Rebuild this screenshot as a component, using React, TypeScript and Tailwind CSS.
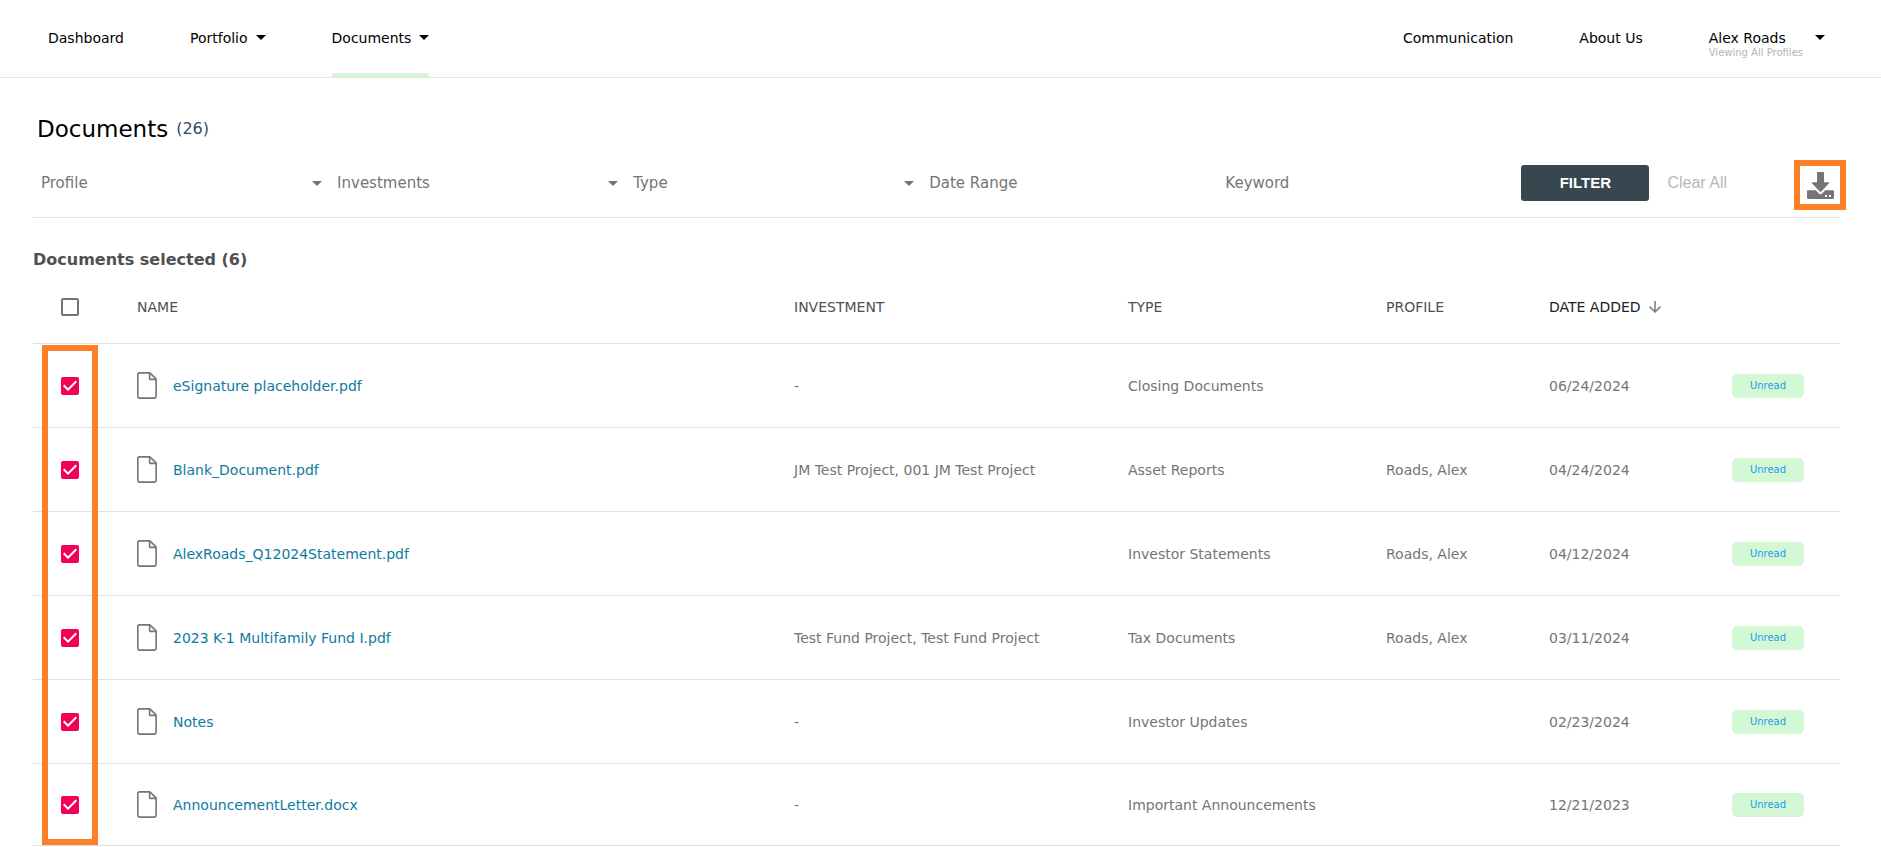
import React, { useState } from 'react';

interface Doc {
  name: string;
  investment: string;
  type: string;
  profile: string;
  date: string;
}

const DOCUMENTS: Doc[] = [
  { name: 'eSignature placeholder.pdf', investment: '-', type: 'Closing Documents', profile: '', date: '06/24/2024' },
  { name: 'Blank_Document.pdf', investment: 'JM Test Project, 001 JM Test Project', type: 'Asset Reports', profile: 'Roads, Alex', date: '04/24/2024' },
  { name: 'AlexRoads_Q12024Statement.pdf', investment: '', type: 'Investor Statements', profile: 'Roads, Alex', date: '04/12/2024' },
  { name: '2023 K-1 Multifamily Fund I.pdf', investment: 'Test Fund Project, Test Fund Project', type: 'Tax Documents', profile: 'Roads, Alex', date: '03/11/2024' },
  { name: 'Notes', investment: '-', type: 'Investor Updates', profile: '', date: '02/23/2024' },
  { name: 'AnnouncementLetter.docx', investment: '-', type: 'Important Announcements', profile: '', date: '12/21/2023' },
];

function Caret({ className = '' }: { className?: string }) {
  return (
    <svg viewBox="0 0 10 5" className={`w-[10px] h-[5px] shrink-0 fill-current ${className}`} aria-hidden="true">
      <path d="M0 0h10L5 5z" />
    </svg>
  );
}

function FileIcon() {
  return (
    <svg viewBox="0 0 20 27" className="w-5 h-[27px] shrink-0" fill="none" stroke="#757575" strokeWidth="1.6" strokeLinejoin="round" aria-hidden="true">
      <path d="M2.4.9h10.4l6.3 6v17.6a1.6 1.6 0 0 1-1.6 1.6H2.4A1.6 1.6 0 0 1 .8 24.5v-22A1.6 1.6 0 0 1 2.4.9z" />
      <path d="M12.6 1v5.600a.8.8 0 0 0 .8.8H19" />
    </svg>
  );
}

function DownloadIcon() {
  return (
    <svg viewBox="0 0 27 27" className="w-[27px] h-[27px]" fill="#757575" aria-hidden="true">
      <path d="M10.8 0h5.400a.8.8 0 0 1 .8.8v9.400h4.300c.8 0 1.100.8.5 1.400l-7.500 7.800a1.100 1.100 0 0 1-1.600 0l-7.500-7.800c-.6-.6-.3-1.400.5-1.400H10V.8a.8.8 0 0 1 .8-.8z" />
      <path
        fillRule="evenodd"
        d="M1.200 18.200h7.600l2.900 3a2.500 2.500 0 0 0 3.600 0l2.900-3h7.600c.7 0 1.200.5 1.200 1.200v6.400c0 .7-.5 1.200-1.200 1.200H1.200C.5 27 0 26.500 0 25.800v-6.400c0-.7.5-1.200 1.200-1.200zM18 23h2v2h-2zM22 23h2v2h-2z"
      />
    </svg>
  );
}

interface CheckboxProps {
  label: string;
  checked: boolean;
  onChange: () => void;
}

function Checkbox({ label, checked, onChange }: CheckboxProps) {
  return (
    <div className="relative w-[18px] h-[18px] ml-7">
      <input
        type="checkbox"
        aria-label={label}
        checked={checked}
        onChange={onChange}
        className="peer block appearance-none w-[18px] h-[18px] rounded-xs border-2 border-[#757575] checked:border-[#f50057] checked:bg-[#f50057] cursor-pointer"
      />
      <svg viewBox="3 3 18 18" className="absolute inset-0 hidden peer-checked:block pointer-events-none" fill="#fff" aria-hidden="true">
        <path d="M10 17l-5-5 1.410-1.410L10 14.170l7.590-7.590L19 8l-9 9z" />
      </svg>
    </div>
  );
}

function FilterSelect({ label }: { label: string }) {
  return (
    <div className="relative flex-1 min-w-0">
      <select aria-label={label} className="block appearance-none w-full h-9 pl-2 pr-6 text-[15px] text-[#757575] bg-transparent">
        <option>{label}</option>
      </select>
      <Caret className="absolute right-[7px] top-4 text-[#757575] pointer-events-none" />
    </div>
  );
}

function FilterInput({ label }: { label: string }) {
  return (
    <div className="flex-1 min-w-0">
      <input type="text" aria-label={label} placeholder={label} className="block w-full h-9 pl-2 text-[15px] text-[#757575] placeholder:text-[#757575]" />
    </div>
  );
}

function Header() {
  return (
    <header className="flex justify-between h-[78px] pl-12 pr-14 border-b border-[#e3e3e3] text-sm text-black">
      <nav className="flex gap-[66px]">
        <a href="#dashboard" className="flex items-center pb-0.5">Dashboard</a>
        <a href="#portfolio" className="flex items-center gap-2 pb-0.5">
          Portfolio <Caret />
        </a>
        <a href="#documents" className="relative flex items-center gap-2 pb-0.5">
          Documents <Caret />
          <span className="absolute inset-x-0 bottom-0 h-1 bg-[#d3f8d3]" />
        </a>
      </nav>
      <div className="flex gap-[66px]">
        <a href="#communication" className="flex items-center pb-0.5">Communication</a>
        <a href="#about" className="flex items-center pb-0.5">About Us</a>
        <button type="button" className="flex items-center gap-3 pb-0.5 text-left">
          <span>
            <span className="block leading-5">Alex Roads</span>
            <span className="block h-0 text-[10px] leading-[10px] text-[#b5b5b5]">Viewing All Profiles</span>
          </span>
          <Caret />
        </button>
      </div>
    </header>
  );
}

export default function App() {
  const [selected, setSelected] = useState<string[]>(DOCUMENTS.map((d) => d.name));

  const toggle = (name: string) => {
    setSelected((prev) => (prev.includes(name) ? prev.filter((n) => n !== name) : [...prev, name]));
  };

  return (
    <div className="bg-white font-['DejaVu_Sans',sans-serif]">
      <Header />

      <main className="pl-[33px] pr-[41px] pt-[37px]">
        <h1 className="flex items-center gap-2 pl-1 text-[23px] leading-7 text-black">
          Documents <span className="text-base text-[#34495e]">(26)</span>
        </h1>

        <div className="flex items-center mt-[17px] pb-[7px] border-b border-[#e3e3e3]">
          <form className="flex flex-1 items-center pb-1" onSubmit={(e) => e.preventDefault()}>
            <FilterSelect label="Profile" />
            <FilterSelect label="Investments" />
            <FilterSelect label="Type" />
            <FilterInput label="Date Range" />
            <FilterInput label="Keyword" />
            <button type="submit" className="w-32 h-9 ml-2 rounded-[3px] bg-[#37474f] font-['Liberation_Sans',sans-serif] text-[15px] font-bold text-white">
              FILTER
            </button>
          </form>
          <button type="button" className="ml-[18px] pb-1 font-['Liberation_Sans',sans-serif] text-base text-[#b8b8b8]">
            Clear All
          </button>
          <button type="button" aria-label="Download" className="flex items-center justify-center w-[52px] h-[50px] ml-[67px] -mr-[6px] border-6 border-[#ff8027]">
            <DownloadIcon />
          </button>
        </div>

        <h2 className="mt-[31px] text-base leading-[22px] font-bold text-[#505050]">Documents selected ({selected.length})</h2>

        <div className="relative">
          <table className="w-full table-fixed border-separate border-spacing-0 text-left text-sm text-[#757575] [&_td]:border-b [&_td]:border-[#e0e0e0] [&_th]:border-b [&_th]:border-[#e0e0e0] [&_th]:font-normal">
            <colgroup>
              <col className="w-[104px]" />
              <col />
              <col className="w-[334px]" />
              <col className="w-[258px]" />
              <col className="w-[163px]" />
              <col className="w-[291px]" />
            </colgroup>
            <thead className="text-[#505050]">
              <tr className="h-[73px]">
                <th>
                  <Checkbox label="Select all" checked={false} onChange={() => setSelected(DOCUMENTS.map((d) => d.name))} />
                </th>
                <th>NAME</th>
                <th>INVESTMENT</th>
                <th>TYPE</th>
                <th>PROFILE</th>
                <th className="text-[#212121]">
                  <button type="button" className="flex items-center gap-2 whitespace-nowrap">
                    DATE ADDED
                    <svg viewBox="0 0 12 12" className="w-3 h-3 shrink-0" fill="none" stroke="#808080" strokeWidth="1.6" aria-hidden="true">
                      <path d="M6 0v11M.6 5.600 6 11l5.400-5.400" />
                    </svg>
                  </button>
                </th>
              </tr>
            </thead>
            <tbody>
              {DOCUMENTS.map((doc) => (
                <tr key={doc.name} className="h-[84px] last:h-[82px]">
                  <td>
                    <Checkbox label={`Select ${doc.name}`} checked={selected.includes(doc.name)} onChange={() => toggle(doc.name)} />
                  </td>
                  <td>
                    <a href="#document" className="flex items-center gap-4 text-[#0d7ba0]">
                      <FileIcon />
                      {doc.name}
                    </a>
                  </td>
                  <td>{doc.investment}</td>
                  <td>{doc.type}</td>
                  <td>{doc.profile}</td>
                  <td>
                    <div className="flex items-center justify-between pr-9">
                      {doc.date}
                      <span className="w-[72px] rounded-[5px] bg-[#d3f8d3] text-center text-[10px] leading-6 text-[#1c9cf0]">Unread</span>
                    </div>
                  </td>
                </tr>
              ))}
            </tbody>
          </table>

          {/* highlight frame around the selected rows */}
          <div className="absolute left-[9px] top-[74px] bottom-px w-14 border-6 border-[#ff8027] pointer-events-none" />
        </div>
      </main>
    </div>
  );
}
